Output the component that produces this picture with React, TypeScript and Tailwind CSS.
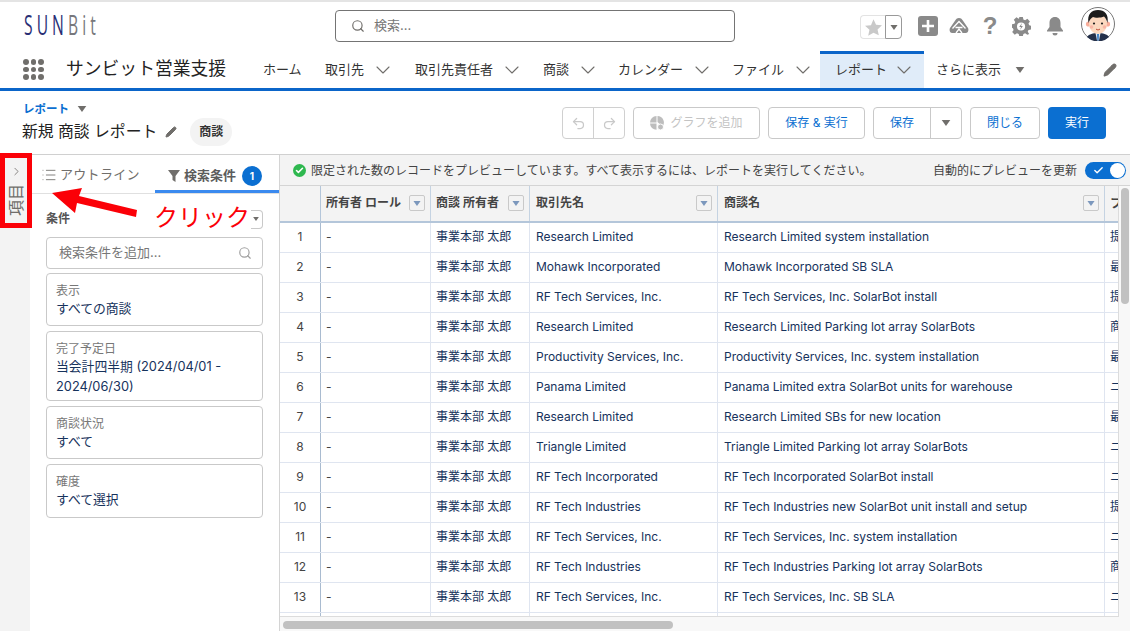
import { ChevronDown, ChevronRight, Search, Check, Undo2, Redo2, List, Pencil } from "lucide-react";

const FONT = "font-['Inter','Noto_Sans_CJK_JP',sans-serif]";

const rows = [
  ["Research Limited", "Research Limited system installation", "提"],
  ["Mohawk Incorporated", "Mohawk Incorporated SB SLA", "最"],
  ["RF Tech Services, Inc.", "RF Tech Services, Inc. SolarBot install", "提"],
  ["Research Limited", "Research Limited Parking lot array SolarBots", "商"],
  ["Productivity Services, Inc.", "Productivity Services, Inc. system installation", "最"],
  ["Panama Limited", "Panama Limited extra SolarBot units for warehouse", "ニ"],
  ["Research Limited", "Research Limited SBs for new location", "最"],
  ["Triangle Limited", "Triangle Limited Parking lot array SolarBots", "ニ"],
  ["RF Tech Incorporated", "RF Tech Incorporated SolarBot install", "ニ"],
  ["RF Tech Industries", "RF Tech Industries new SolarBot unit install and setup", "提"],
  ["RF Tech Services, Inc.", "RF Tech Services, Inc. system installation", "ニ"],
  ["RF Tech Industries", "RF Tech Industries Parking lot array SolarBots", "商"],
  ["RF Tech Services, Inc.", "RF Tech Services, Inc. SB SLA", "ニ"],
];

const navItems = [
  { label: "ホーム", w: "w-[62px]" },
  { label: "取引先", w: "w-[90px]", menu: true },
  { label: "取引先責任者", w: "w-[128px]", menu: true },
  { label: "商談", w: "w-[75px]", menu: true },
  { label: "カレンダー", w: "w-[114px]", menu: true },
  { label: "ファイル", w: "w-[88px]", menu: true },
];

const filters = [
  { label: "表示", value: "すべての商談", h: "h-[53px]" },
  { label: "完了予定日", value: "当会計四半期 (2024/04/01 - 2024/06/30)", h: "h-[70px]" },
  { label: "商談状況", value: "すべて", h: "h-[53px]" },
  { label: "確度", value: "すべて選択", h: "h-[54px]" },
];

function Caret({ className }: { className: string }) {
  return (
    <svg viewBox="0 0 10 7" className={className} fill="currentColor">
      <path d="M0 0h10L5 7z" />
    </svg>
  );
}

function ColumnMenu() {
  return (
    <span className="flex h-[16px] w-[16px] shrink-0 items-center justify-center rounded-[2px] border border-[#c9c9c9] bg-[#f3f3f3] text-[#7c98bd]">
      <Caret className="h-[5px] w-[8px]" />
    </span>
  );
}

function HeaderCell({ label, className }: { label: string; className: string }) {
  return (
    <div className={`flex h-full shrink-0 items-center justify-between border-r border-[#c5d3e2] pb-[1px] pr-[5px] text-[12px] font-semibold text-[#444] ${className}`}>
      <span>{label}</span>
      <ColumnMenu />
    </div>
  );
}

function Avatar() {
  return (
    <svg viewBox="0 0 34 34" className="h-[34px] w-[34px]">
      <circle cx="17" cy="17" r="16.5" fill="#fff" stroke="#777" />
      <path d="M6 30c2-3 6-4 11-4s9 1 11 4a16 16 0 0 1-22 0z" fill="#24304a" />
      <path d="M14.500 26h5l-1.500 7.500h-2z" fill="#dfeaf5" />
      <path d="M16 27h2l-.3 6.500h-1.400z" fill="#3c7fc4" />
      <circle cx="7.500" cy="17" r="2.600" fill="#f8ad9a" />
      <circle cx="26.500" cy="17" r="2.600" fill="#f8ad9a" />
      <ellipse cx="17" cy="16.500" rx="9" ry="10.500" fill="#fcd9c0" />
      <path d="M7.500 16C6 7 10.500 3 17 3s11 4 9.500 13c-.8-3-1.800-5-3.500-6.500-3 1.500-9 1.500-11 .5-2 1-3.500 3-4.500 6z" fill="#1c1c1c" />
      <circle cx="13" cy="16.500" r="1.100" fill="#222" />
      <circle cx="21" cy="16.500" r="1.100" fill="#222" />
      <circle cx="10.500" cy="20" r="1.800" fill="#f9b7a6" />
      <circle cx="23.500" cy="20" r="1.800" fill="#f9b7a6" />
      <path d="M15 22c1.400 1.200 2.600 1.200 4 0" stroke="#c0503c" fill="none" />
    </svg>
  );
}

function TopBar() {
  return (
    <div className="flex h-[52px] shrink-0 items-start border-t-[2px] border-[#e4e4e4] bg-white">
      <div className="ml-[24px] mt-[7px] w-[311px] font-['Open_Sans',sans-serif] text-[27px] leading-[32px] tracking-[7px]">
        <span className="inline-block origin-left scale-x-[0.58] whitespace-nowrap">
          <span className="text-[#2a2f75]">SUN</span>
          <span className="text-[#77777c]">Bit</span>
        </span>
      </div>
      <div className="mt-[8px] flex h-[32px] w-[400px] items-center rounded-[4px] border border-[#747474] pl-[15px]">
        <Search className="h-[14px] w-[14px] text-[#706e6b]" strokeWidth={2} />
        <span className="ml-[9px] text-[13px] text-[#777]">検索...</span>
      </div>
      <div className="ml-[125px] mt-[12px] flex h-[26px] items-center">
        <div className="flex h-[24px] w-[25px] items-center justify-center rounded-l-[4px] border border-r-0 border-[#e3e3e3]">
          <svg viewBox="0 0 24 24" className="h-[19px] w-[19px]" fill="#c9c9c9">
            <path d="M12 1.500l3.200 7 7.500.8-5.600 5.100 1.600 7.500L12 18.500l-6.700 3.900 1.600-7.500-5.600-5.100 7.500-.8z" />
          </svg>
        </div>
        <div className="flex h-[24px] w-[17px] items-center justify-center rounded-r-[4px] border border-[#999] text-[#706e6b]">
          <Caret className="h-[5px] w-[8px]" />
        </div>
      </div>
      <div className="ml-[16px] mt-[12px] flex h-[24px] items-center gap-[11px] text-[#8a8a8a]">
        <svg viewBox="0 0 20 20" className="h-[20px] w-[20px]">
          <rect width="20" height="20" rx="3" fill="#8a8a8a" />
          <path d="M10 4v12M4 10h12" stroke="#fff" strokeWidth="2.600" />
        </svg>
        <svg viewBox="0 0 20 20" className="h-[20px] w-[20px]">
          <path d="M10 2c2 0 3 1 4.500 3.500L19 12c1 2 0 5-2 5H3c-2 0-3-3-2-5l4.500-6.500C7 3 8 2 10 2z" fill="#8a8a8a" />
          <path d="M3.500 12.500L10 5.500l6.500 7M6.500 11.500h7M7 17l3-4 3 4" stroke="#fff" strokeWidth="1.300" fill="none" />
        </svg>
        <span className="w-[20px] text-center font-['Liberation_Sans',sans-serif] text-[24px] font-bold leading-none">?</span>
        <svg viewBox="0 0 21 21" className="ml-[1px] h-[19px] w-[19px]" fill="#8a8a8a">
          <path fillRule="evenodd" d="M8 0h4l.6 2.800 1.900.8L17 2l2.800 2.900-1.600 2.400.8 1.900 2 .6v4l-2.800.6-.8 1.900 1.600 2.400L17 19.600l-2.500-1.600-1.900.8L12 21H8l-.6-2.200-1.900-.8L3 19.600.2 16.700l1.600-2.400L1 12.400 0 12V8l2.800-.6.800-1.900L2 3 4.900.2l2.500 1.600L8 1zM10 6a4.500 4.500 0 1 0 0 9 4.500 4.500 0 0 0 0-9z" />
          <path d="M11 6.500L8 11h2l-1 3.500 3-4.500h-2z" />
        </svg>
        <svg viewBox="0 0 20 20" className="ml-[3px] h-[20px] w-[20px]" fill="#8a8a8a">
          <path d="M10 1c3.500 0 5.500 2.500 5.500 6v4l2.500 3.500v1H2v-1L4.500 11V7C4.500 3.500 6.500 1 10 1z" />
          <path d="M7.500 17h5a2.500 2.500 0 0 1-5 0z" />
        </svg>
      </div>
      <div className="ml-[16px] mt-[5px]">
        <Avatar />
      </div>
    </div>
  );
}

function NavBar() {
  return (
    <div className="flex h-[39px] shrink-0 items-stretch border-b-[3px] border-[#0b65c9] bg-white pl-[23px] text-[13px] text-[#333]">
      <div className="mt-[7px] grid h-[21px] w-[21px] shrink-0 grid-cols-3 gap-[2px]">
        {Array.from({ length: 9 }).map((_, i) => (
          <span key={i} className="h-[5.500px] w-[5.500px] rounded-full bg-[#706e6b]" />
        ))}
      </div>
      <div className="ml-[22px] w-[197px] shrink-0 pt-[4px] text-[17.800px] leading-[26px] text-[#222]">サンビット営業支援</div>
      {navItems.map((n) => (
        <div key={n.label} className={`flex shrink-0 items-center pb-[1px] ${n.w}`}>
          <span>{n.label}</span>
          {n.menu && <ChevronDown className="ml-[7px] h-[24px] w-[24px] text-[#706e6b]" strokeWidth={1.100} />}
        </div>
      ))}
      <div className="-mt-[1px] flex w-[104px] shrink-0 items-center justify-between border-t-[3px] border-[#0b65c9] bg-[#e0ecf9] pb-[3px] pl-[15px] pr-[8px] text-[#333]">
        <span>レポート</span>
        <ChevronDown className="h-[24px] w-[24px] text-[#706e6b]" strokeWidth={1.100} />
      </div>
      <div className="ml-[12px] flex w-[167px] shrink-0 items-center pb-[1px]">
        <span>さらに表示</span>
        <Caret className="ml-[14px] h-[6px] w-[10px] text-[#706e6b]" />
      </div>
      <div className="flex items-center pb-[1px]">
        <Pencil className="h-[14px] w-[14px] fill-[#706e6b] text-[#706e6b]" />
      </div>
    </div>
  );
}

function OutlineButton({ children, className }: { children: React.ReactNode; className: string }) {
  return (
    <div className={`flex h-[32px] items-center justify-center rounded-[4px] border border-[#c9c9c9] bg-white text-[12px] text-[#0b6fd1] ${className}`}>
      {children}
    </div>
  );
}

function PageHeader() {
  return (
    <div className="flex h-[63px] shrink-0 items-start justify-between bg-white pl-[22px] pr-[24px]">
      <div>
        <div className="mt-[10px] flex items-center pl-[1px] text-[11.500px] font-semibold leading-[16px] text-[#0b6fd1]">
          レポート
          <Caret className="ml-[8px] h-[6px] w-[10px] text-[#706e6b]" />
        </div>
        <div className="mt-[1px] flex items-center">
          <span className="text-[15.800px] leading-[26px] text-[#222]">新規 商談 レポート</span>
          <Pencil className="ml-[8px] h-[12px] w-[12px] fill-[#706e6b] text-[#706e6b]" />
          <span className="ml-[13px] flex h-[28px] w-[42px] items-center justify-center rounded-[14px] bg-[#f3f3f3] text-[12px] font-semibold text-[#333]">商談</span>
        </div>
      </div>
      <div className="mt-[16px] flex items-center">
        <div className="flex h-[32px] w-[63px] rounded-[4px] border border-[#d0d0d0] text-[#c9c9c9]">
          <span className="flex flex-1 items-center justify-center border-r border-[#d0d0d0]"><Undo2 className="h-[15px] w-[15px]" /></span>
          <span className="flex flex-1 items-center justify-center"><Redo2 className="h-[15px] w-[15px]" /></span>
        </div>
        <OutlineButton className="ml-[8px] w-[127px] gap-[6px] text-[#c9c9c9]">
          <svg viewBox="0 0 14 14" className="h-[14px] w-[14px]" fill="#bdbdbd">
            <path d="M6.500 0v6.500H0A6.500 6.500 0 0 1 6.500 0zM7.500 0a6.500 6.500 0 0 1 5 10.500L7.500 6zM0 7.500h6.500v6.300A6.500 6.500 0 0 1 0 7.500z" />
            <circle cx="10.500" cy="11" r="3" stroke="#fff" />
          </svg>
          <span className="text-[#c4c4c4]">グラフを追加</span>
        </OutlineButton>
        <OutlineButton className="ml-[8px] w-[97px]">保存 &amp; 実行</OutlineButton>
        <div className="ml-[8px] flex h-[32px] w-[89px] rounded-[4px] border border-[#c9c9c9] text-[12px] text-[#0b6fd1]">
          <span className="flex w-[57px] items-center justify-center border-r border-[#c9c9c9]">保存</span>
          <span className="flex flex-1 items-center justify-center"><Caret className="h-[6px] w-[10px] text-[#706e6b]" /></span>
        </div>
        <OutlineButton className="ml-[8px] w-[70px]">閉じる</OutlineButton>
        <div className="ml-[8px] flex h-[32px] w-[58px] items-center justify-center rounded-[4px] bg-[#0b6fd1] text-[12px] text-white">実行</div>
      </div>
    </div>
  );
}

function FilterPanel() {
  return (
    <div className="w-[250px] shrink-0 border-r border-[#d4d4d4] bg-white">
      <div className="flex h-[39px] border-b border-[#e0e0e0] text-[13px]">
        <div className="flex w-[125px] items-center pl-[11px] pt-[1px] tracking-[0.3px] text-[#706e6b]">
          <List className="mr-[3px] h-[16px] w-[16px]" strokeWidth={1.300} />
          アウトライン
        </div>
        <div className="flex flex-1 items-center border-b-[3px] border-[#3b8aef] pl-[13px] pt-[7px] font-semibold text-[#5c5c5c]">
          <svg viewBox="0 0 12 12" className="mr-[4px] h-[12px] w-[12px]" fill="#706e6b"><path d="M0 0h12L7.500 6v6l-3-2V6z" /></svg>
          検索条件
          <span className="ml-[6px] flex h-[20px] w-[20px] items-center justify-center rounded-full bg-[#0b6fd1] text-[10px] font-bold text-white">1</span>
        </div>
      </div>
      <div className="px-[16px]">
        <div className="flex h-[43px] items-center justify-between pt-[7px]">
          <span className="text-[12px] font-semibold text-[#555]">条件</span>
          <span className="flex h-[19px] w-[14px] items-center justify-center rounded-r-[4px] border border-l-0 border-[#c9c9c9] text-[#706e6b]">
            <Caret className="h-[4px] w-[6px]" />
          </span>
        </div>
        <div className="flex h-[32px] items-center justify-between rounded-[4px] border border-[#c9c9c9] pl-[12px] pr-[10px] text-[13px] text-[#777]">
          <span>検索条件を追加...</span>
          <Search className="h-[14px] w-[14px] text-[#a0a0a0]" />
        </div>
        <div className="mt-[4px] flex flex-col gap-[5px]">
          {filters.map((f) => (
            <div key={f.label} className={`rounded-[4px] border border-[#c9c9c9] pl-[9px] pr-[10px] pt-[9px] text-[12px] ${f.h}`}>
              <div className="leading-[16px] text-[#777]">{f.label}</div>
              <div className="text-[12.800px] leading-[20px] text-[#16325c]">{f.value}</div>
            </div>
          ))}
        </div>
      </div>
    </div>
  );
}

function ReportTable() {
  return (
    <div className="flex min-w-0 flex-1 flex-col bg-[#f8f8f8]">
      <div className="flex h-[31px] shrink-0 items-center justify-between border-b border-[#d4d4d4] bg-[#f3f3f3] pl-[13px] pr-[4px] pt-[1px] text-[12px] text-[#444]">
        <div className="flex items-center">
          <span className="mr-[5px] flex h-[13px] w-[13px] items-center justify-center rounded-full bg-[#2eb84f]">
            <Check className="h-[9px] w-[9px] text-white" strokeWidth={4} />
          </span>
          限定された数のレコードをプレビューしています。すべて表示するには、レポートを実行してください。
        </div>
        <div className="flex items-center">
          <span className="mr-[8px]">自動的にプレビューを更新</span>
          <span className="flex h-[17px] w-[41px] items-center justify-between rounded-full bg-[#0b6fd1] pl-[8px] pr-[1px]">
            <Check className="h-[11px] w-[11px] text-white" strokeWidth={3} />
            <span className="h-[15px] w-[15px] rounded-full bg-white" />
          </span>
        </div>
      </div>
      <div className="flex min-h-0 flex-1">
        <div className="h-[431px] w-[839px] shrink-0 overflow-hidden border-r border-b border-[#dcdcdc] bg-white">
          <div className="flex h-[37px] border-b-[2px] border-[#b4c6da] bg-[#f3f3f3]">
            <div className="w-[41px] shrink-0 border-r border-[#b4c6da]" />
            <HeaderCell label="所有者 ロール" className="w-[110px] pl-[5px]" />
            <HeaderCell label="商談 所有者" className="w-[99px] pl-[5px]" />
            <HeaderCell label="取引先名" className="w-[188px] pl-[6px]" />
            <HeaderCell label="商談名" className="w-[387px] pl-[6px]" />
            <div className="flex flex-1 items-center overflow-hidden pl-[5px] text-[12px] font-semibold text-[#444]">
              <span className="inline-block w-[9px] overflow-hidden whitespace-nowrap">フ</span>
            </div>
          </div>
          {rows.map((r, i) => (
            <div key={i} className="flex h-[30px] border-b border-[#dfe5f0] text-[12px] tracking-[-0.020px] text-[#16325c]">
              <div className="flex w-[41px] shrink-0 items-center justify-center border-r border-[#a9bbd0] pb-[2px] text-[#444]">{i + 1}</div>
              <div className="flex w-[110px] shrink-0 items-center border-r border-[#dfe5f0] pb-[2px] pl-[5px] text-[#444]">-</div>
              <div className="flex w-[99px] shrink-0 items-center border-r border-[#dfe5f0] pb-[2px] pl-[5px]">事業本部 太郎</div>
              <div className="flex w-[188px] shrink-0 items-center border-r border-[#dfe5f0] pb-[2px] pl-[6px]">{r[0]}</div>
              <div className="flex w-[387px] shrink-0 items-center border-r border-[#dfe5f0] pb-[2px] pl-[6px]">{r[1]}</div>
              <div className="flex flex-1 items-center overflow-hidden pb-[2px] pl-[5px]">
                <span className="inline-block w-[9px] overflow-hidden whitespace-nowrap">{r[2]}</span>
              </div>
            </div>
          ))}
          <div className="flex h-[6px]">
            <div className="w-[41px] shrink-0 border-r border-[#a9bbd0]" />
            <div className="w-[110px] shrink-0 border-r border-[#dfe5f0]" />
            <div className="w-[99px] shrink-0 border-r border-[#dfe5f0]" />
            <div className="w-[188px] shrink-0 border-r border-[#dfe5f0]" />
            <div className="w-[387px] shrink-0 border-r border-[#dfe5f0]" />
          </div>
        </div>
        <div className="ml-[2px] pt-[2px]">
          <div className="h-[116px] w-[8px] rounded-full bg-[#c1c1c1]" />
        </div>
      </div>
      <div className="mb-[2px] ml-[3px] h-[8px] w-[390px] shrink-0 rounded-full bg-[#c1c1c1]" />
    </div>
  );
}

export default function App() {
  return (
    <div className={`relative flex h-[631px] w-[1130px] flex-col overflow-hidden bg-white ${FONT}`}>
      <TopBar />
      <NavBar />
      <PageHeader />
      <div className="flex min-h-0 flex-1 border-t border-[#d0d0d0]">
        <div className="w-[30px] shrink-0 bg-[#f3f3f3]" />
        <FilterPanel />
        <ReportTable />
      </div>

      {/* annotation drawn over the page */}
      <div className="absolute left-0 top-[153px] flex h-[75px] w-[32px] flex-col items-center border-[5px] border-[#fb0007] bg-[#f3f3f3] text-[#706e6b]">
        <ChevronRight className="mt-[7px] h-[13px] w-[13px]" strokeWidth={1.500} />
        <span className="mt-[6px] rotate-180 text-[16px] leading-[16px] [text-orientation:sideways] [writing-mode:vertical-rl]">項目</span>
      </div>
      <svg viewBox="0 0 90 35" className="absolute left-[50px] top-[185px] h-[35px] w-[90px]">
        <path d="M2 8 L32 3 L29 11 L87 25 L86 32 L27 18 L25 28 Z" fill="#fb0007" />
      </svg>
      <div className="absolute left-[150px] top-[203px] h-[34px] w-[101px] bg-white pl-[4px] text-[24px] leading-[30px] text-[#fb0007]">クリック</div>
    </div>
  );
}
